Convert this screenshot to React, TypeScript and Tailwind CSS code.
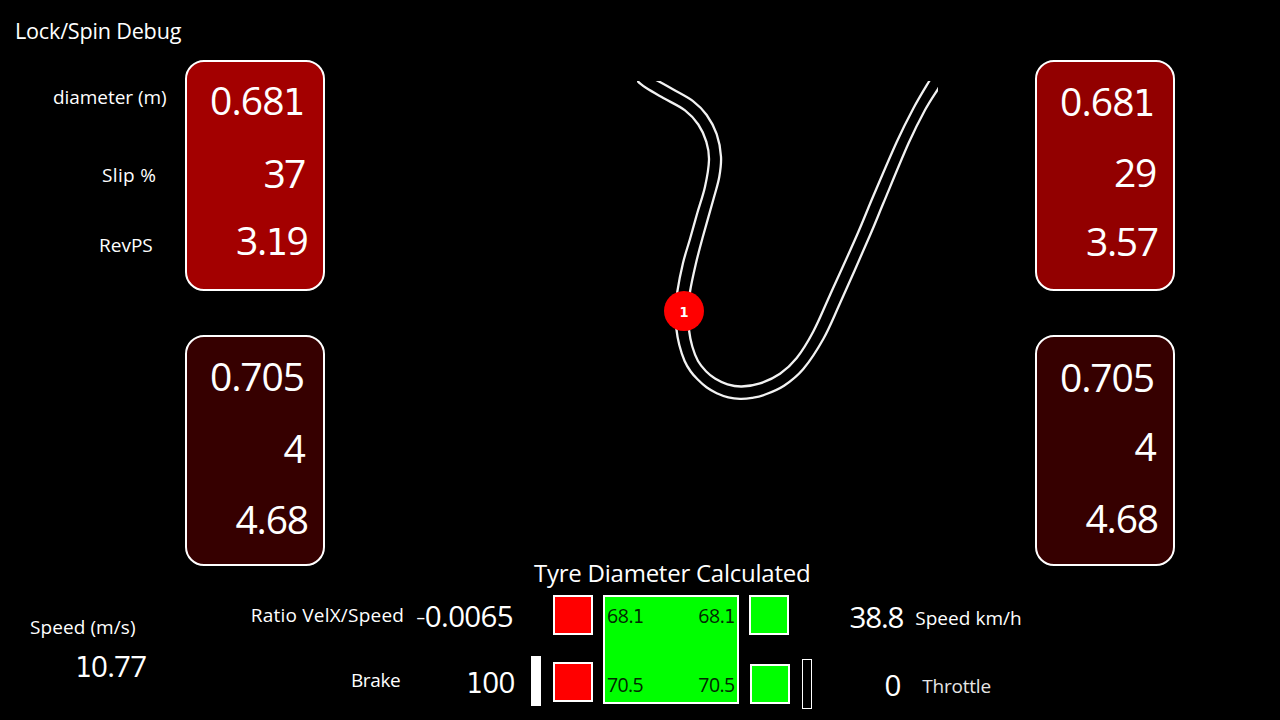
import type { ReactNode } from "react";

type Point = [number, number];

const OUTER_EDGE: Point[] = [
  [634, 78], [639, 82.5], [646.7, 88.3], [663.3, 98], [685, 110.3], [698.3, 124.5], [706.3, 141.7], [709, 160], [705, 186.7],
  [697.3, 213], [690, 239], [683, 263], [677.3, 291.7], [675.5, 311], [676.4, 329], [679.3, 345], [684.6, 361], [690.7, 371.5],
  [697.5, 379.3], [706.5, 387.3], [716.7, 393.2], [728.3, 397.3], [740, 398.8], [752, 397.9], [764, 395], [784, 385.7], [803.3, 369], [823.3, 339],
  [840, 303.3], [869.7, 236], [883.3, 203.3], [908.3, 143.8], [925, 110], [938, 89], [942, 83],
];

const INNER_EDGE: Point[] = [
  [652, 78], [659, 81.5], [673.3, 89.5], [693.3, 101.3], [706.7, 115], [716.7, 134.2], [721, 156.7], [719.3, 176.7],
  [713.7, 198.3], [702.5, 238], [695.8, 264], [690, 291.7], [688, 311], [689, 330], [692.3, 346.5], [698, 361],
  [706, 371.2], [715, 378.5], [727.5, 384.3], [741.7, 386.5], [760, 383.4], [780, 373.7], [796.7, 358], [813.3, 331.5],
  [830, 295], [857, 235], [873.3, 196], [896.7, 142], [913.3, 108.5], [929.3, 81], [932, 77],
];

/** Catmull-Rom spline through the given points. */
function smooth(points: Point[]): string {
  let d = `M${points[0][0]} ${points[0][1]}`;
  for (let i = 0; i < points.length - 1; i++) {
    const a = points[Math.max(i - 1, 0)];
    const b = points[i];
    const c = points[i + 1];
    const e = points[Math.min(i + 2, points.length - 1)];
    d += ` C${b[0] + (c[0] - a[0]) / 6} ${b[1] + (c[1] - a[1]) / 6} ${c[0] - (e[0] - b[0]) / 6} ${c[1] - (e[1] - b[1]) / 6} ${c[0]} ${c[1]}`;
  }
  return d;
}

/** Numeric readout; the digit one is set in a face that gives it a foot. */
function Num({ value, className }: { value: string; className: string }) {
  return (
    <span className={`block whitespace-nowrap ${className}`}>
      {value.split(/([1-])/).filter(Boolean).map((part, i) =>
        part === "1" ? (
          <span key={i} className='font-["DejaVu_Sans_Condensed","DejaVu_Sans",sans-serif] text-[0.97em] leading-[0]'>1</span>
        ) : part === "-" ? (
          <span key={i} className="font-light">-</span>
        ) : (
          part
        ),
      )}
    </span>
  );
}

function Label({ children, className }: { children: ReactNode; className: string }) {
  return <span className={`block whitespace-nowrap text-[19px] leading-[28px] ${className}`}>{children}</span>;
}

function WheelCard({ className, rows }: { className: string; rows: [string, string][] }) {
  return (
    <div className={`h-[231px] w-[140px] rounded-[19px] border-2 border-white text-[39px] leading-[40px] ${className}`}>
      {rows.map(([value, cls], i) => (
        <Num key={i} value={value} className={cls} />
      ))}
    </div>
  );
}

function TrackMap() {
  return (
    <svg className="ml-[312px] mt-[81px] block h-[320px] w-[301px]" viewBox="637 81 301 320" fill="none">
      <path d={smooth(OUTER_EDGE)} stroke="#f2f2f2" strokeWidth="2.3" />
      <path d={smooth(INNER_EDGE)} stroke="#f2f2f2" strokeWidth="2.3" />
      <circle cx="684" cy="311" r="20" fill="#ff0000" />
      <text x="684" y="316.5" textAnchor="middle" fill="#fff" fontSize="14.5" fontWeight="700" fontFamily="DejaVu Sans Condensed, DejaVu Sans, sans-serif">1</text>
    </svg>
  );
}

export default function App() {
  return (
    <main className='h-[720px] w-[1280px] overflow-hidden bg-black font-["Open_Sans","Noto_Sans",sans-serif] text-white'>
      <section className="flex h-[566px]">
        <div className="w-[185px] pt-[16px]">
          <h1 className="ml-[15px] whitespace-nowrap text-[21.6px] leading-[30px] tracking-[-0.2px]">Lock/Spin Debug</h1>
          <Label className="ml-[53px] mt-[37px] tracking-[-0.05px]">diameter (m)</Label>
          <Label className="ml-[102px] mt-[50px] tracking-[0.35px]">Slip %</Label>
          <Label className="ml-[99px] mt-[42px]">RevPS</Label>
        </div>
        <div className="flex flex-col gap-[44px] pt-[60px]">
          <WheelCard
            className="bg-[#a30000] pt-[18px]"
            rows={[
              ["0.681", "ml-[23px] tracking-[-0.9px]"],
              ["37", "mt-[33px] ml-[76.5px] tracking-[-1.9px]"],
              ["3.19", "mt-[27px] ml-[49px] tracking-[-1.2px]"],
            ]}
          />
          <WheelCard
            className="bg-[#360000] pt-[19px]"
            rows={[
              ["0.705", "ml-[23px] tracking-[-1.1px]"],
              ["4", "mt-[32px] ml-[96.5px]"],
              ["4.68", "mt-[31px] ml-[48.5px] tracking-[-1.2px]"],
            ]}
          />
        </div>
        <div className="w-[710px]">
          <TrackMap />
        </div>
        <div className="flex flex-col gap-[44px] pt-[60px]">
          <WheelCard
            className="bg-[#920000] pt-[19px]"
            rows={[
              ["0.681", "ml-[23px] tracking-[-0.9px]"],
              ["29", "mt-[31px] ml-[77px] tracking-[-1.2px]"],
              ["3.57", "mt-[29px] ml-[49px] tracking-[-1.4px]"],
            ]}
          />
          <WheelCard
            className="bg-[#360000] pt-[20px]"
            rows={[
              ["0.705", "ml-[23px] tracking-[-1.1px]"],
              ["4", "mt-[29px] ml-[97.5px]"],
              ["4.68", "mt-[32px] ml-[48.5px] tracking-[-1.2px]"],
            ]}
          />
        </div>
      </section>

      <section className="flex h-[154px] items-start">
        <div className="w-[250px] pt-[47px]">
          <Label className="ml-[30px] tracking-[0.08px]">Speed (m/s)</Label>
          <Num value="10.77" className="ml-[75.5px] mt-[5px] text-[29.5px] leading-[40px] tracking-[-0.8px]" />
        </div>

        <div className="w-[281px] pt-[30px]">
          <div className="flex items-start">
            <Label className="mt-[5px] ml-[0.7px] w-[165.3px] tracking-[0.22px]">Ratio VelX/Speed</Label>
            <Num value="-0.0065" className="text-[29.5px] leading-[40px] tracking-[-0.65px]" />
          </div>
          <div className="mt-[26px] flex items-start pl-[101px]">
            <Label className="mt-[4px] w-[115.5px] tracking-[-0.4px]">Brake</Label>
            <Num value="100" className="text-[29.5px] leading-[40px] tracking-[-0.6px]" />
          </div>
        </div>

        <div className="w-[281px]">
          <h2 className="ml-[3px] h-[29px] whitespace-nowrap text-[24px] leading-[14px] tracking-[-0.24px]">Tyre Diameter Calculated</h2>
          <div className="flex items-start">
            <div className="mt-[61px] h-[50px] w-[10px] bg-white" />
            <div className="ml-[12px] flex flex-col gap-[27px]">
              <div className="size-[40px] border-2 border-white bg-[#ff0000]" />
              <div className="size-[40px] border-2 border-white bg-[#ff0000]" />
            </div>
            <div className="ml-[10px] flex h-[109px] w-[136px] justify-between border-2 border-white bg-[#00ff00] pl-[2px] pr-[2px] pt-[5px] text-[19.5px] leading-[28px] text-[#002800]">
              <div className="flex flex-col gap-[41px]">
                <Num value="68.1" className="tracking-[-0.4px]" />
                <Num value="70.5" className="tracking-[-0.6px]" />
              </div>
              <div className="flex flex-col gap-[41px]">
                <Num value="68.1" className="tracking-[-0.4px]" />
                <Num value="70.5" className="tracking-[-0.6px]" />
              </div>
            </div>
            <div className="ml-[10px] flex w-[41px] flex-col gap-[29px]">
              <div className="size-[40px] border-2 border-white bg-[#00ff00]" />
              <div className="ml-px size-[40px] border-2 border-white bg-[#00ff00]" />
            </div>
            <div className="ml-[12px] mt-[64px] h-[50px] w-[10px] border border-white" />
          </div>
        </div>

        <div className="pt-[31px]">
          <div className="flex items-start pl-[37.5px]">
            <Num value="38.8" className="w-[65.7px] text-[29.5px] leading-[40px] tracking-[-1.15px]" />
            <Label className="mt-[7px] tracking-[0.05px]">Speed km/h</Label>
          </div>
          <div className="mt-[28px] flex items-start pl-[72.5px]">
            <Num value="0" className="w-[37.7px] text-[29.5px] leading-[40px]" />
            <Label className="mt-[7px] tracking-[-0.2px] text-[#e6e6e6]">Throttle</Label>
          </div>
        </div>
      </section>
    </main>
  );
}
